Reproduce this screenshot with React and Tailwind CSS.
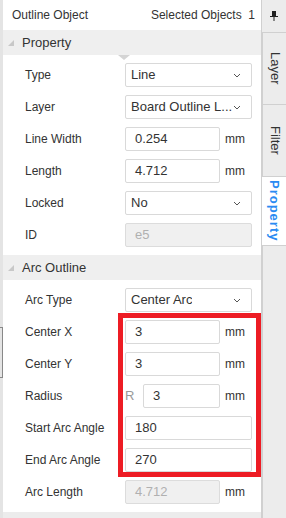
import React from 'react';

const font = { fontFamily: '"Liberation Sans", Arial, sans-serif' };

const Chevron = () => (
    <svg width="8" height="5" viewBox="0 0 8 5" className="shrink-0">
        <path d="M1 1 L4 4 L7 1" fill="none" stroke="#555" strokeWidth="1" />
    </svg>
);

const Select = ({ value }) => (
    <div className="w-[127px] h-[24px] border border-[#d9d9d9] rounded-[2px] bg-white flex items-center pl-[5px] pr-[10px] justify-between text-[13px]">
        <span className="text-[#333] truncate">{value}</span>
        <Chevron />
    </div>
);

const Input = ({ value, wide, disabled }) => (
    <div
        className={`${wide ? 'w-[127px]' : 'w-[95px]'} h-[24px] border rounded-[2px] flex items-center pl-[9px] text-[13px] ${
            disabled ? 'bg-[#f0f0f0] border-[#dcdcdc] text-[#b0b0b0]' : 'bg-white border-[#d9d9d9] text-[#333]'
        }`}
    >
        {value}
    </div>
);

const Row = ({ label, children }) => (
    <div className="h-[32px] flex items-center">
        <div className="w-[100px] text-[#333]">{label}</div>
        {children}
    </div>
);

const Unit = () => <span className="ml-[5px] text-[#333]">mm</span>;

const SectionHeader = ({ title }) => (
    <div className="h-[25px] bg-[#efefef] flex items-center pl-[4px]">
        <svg width="8" height="8" viewBox="0 0 8 8" className="mr-[7px]">
            <path d="M7 1 L7 7 L1 7 Z" fill="#c8c8c8" />
        </svg>
        <span className="text-[#333] text-[13px]">{title}</span>
    </div>
);

const Tab = ({ label, active, h }) => (
    <div
        className={`w-[25px] ${h} border-b border-[#d0d0d0] flex items-center justify-center ${
            active ? 'bg-white' : 'bg-[#ececec] border-l border-[#d0d0d0]'
        }`}
    >
        <span
            className={`[writing-mode:vertical-rl] ${
                active ? 'text-[13px] text-[#2a8bf2] font-bold tracking-[1px]' : 'text-[13px] text-[#333]'
            }`}
        >
            {label}
        </span>
    </div>
);

export default function App() {
    return (
        <div className="w-[286px] h-[518px] flex bg-[#ececec] text-[12px] relative overflow-hidden" style={font}>
            {/* left splitter strip */}
            <div className="w-[3px] bg-[#e4e4e4] flex flex-col">
                <div className="mt-[327px] h-[51px] border border-l-0 border-[#888] bg-[#e4e4e4]" />
            </div>

            {/* main panel */}
            <div className="w-[258px] flex flex-col">
                <div className="h-[30px] bg-white flex items-center justify-between pl-[9px] pr-[6px] text-[#333]">
                    <span>Outline Object</span>
                    <span>Selected Objects&nbsp; 1</span>
                </div>

                <SectionHeader title="Property" />
                <div className="bg-white pl-[22px] pt-[4px] pb-[4px] relative">
                    <svg width="12" height="5" viewBox="0 0 12 5" className="absolute left-[115px] top-0">
                        <path d="M0 0 L12 0 L6 5 Z" fill="#d4d4d4" />
                    </svg>
                    <Row label="Type"><Select value="Line" /></Row>
                    <Row label="Layer"><Select value="Board Outline L..." /></Row>
                    <Row label="Line Width"><Input value="0.254" /><Unit /></Row>
                    <Row label="Length"><Input value="4.712" /><Unit /></Row>
                    <Row label="Locked"><Select value="No" /></Row>
                    <Row label="ID"><Input value="e5" wide disabled /></Row>
                </div>

                <SectionHeader title="Arc Outline" />
                <div className="bg-white pl-[22px] pt-[4px] pb-[4px]">
                    <Row label="Arc Type"><Select value="Center Arc" /></Row>
                    <Row label="Center X"><Input value="3" /><Unit /></Row>
                    <Row label="Center Y"><Input value="3" /><Unit /></Row>
                    <Row label="Radius">
                        <span className="w-[18px] text-[#999] text-[13px]">R</span>
                        <div className="w-[77px] h-[24px] border border-[#d9d9d9] rounded-[2px] flex items-center pl-[9px] text-[13px] text-[#333]">3</div>
                        <Unit />
                    </Row>
                    <Row label="Start Arc Angle"><Input value="180" wide /></Row>
                    <Row label="End Arc Angle"><Input value="270" wide /></Row>
                    <Row label="Arc Length"><Input value="4.712" disabled /><Unit /></Row>
                </div>
                <div className="flex-1 bg-[#ececec]" />
            </div>

            {/* right tab column */}
            <div className="w-[25px] flex flex-col border-l border-[#d0d0d0] bg-[#ececec]">
                <div className="h-[32px] flex items-center justify-center">
                    <svg width="8" height="10" viewBox="0 0 8 10">
                        <path d="M2 0 H6 V5 H8 V6 H4.5 V10 H3.5 V6 H0 V5 H2 Z" fill="#222" />
                    </svg>
                </div>
                <div className="border-t border-[#d0d0d0]" />
                <Tab label="Layer" h="h-[72px]" />
                <Tab label="Filter" h="h-[72px]" />
                <Tab label="Property" active h="h-[69px]" />
                <div className="flex-1 border-l border-[#d0d0d0]" />
            </div>

            {/* annotation box */}
            <div className="absolute left-[118px] top-[313px] w-[143px] h-[164px] border-[5px] border-[#ed1c24] pointer-events-none" />
        </div>
    );
}
